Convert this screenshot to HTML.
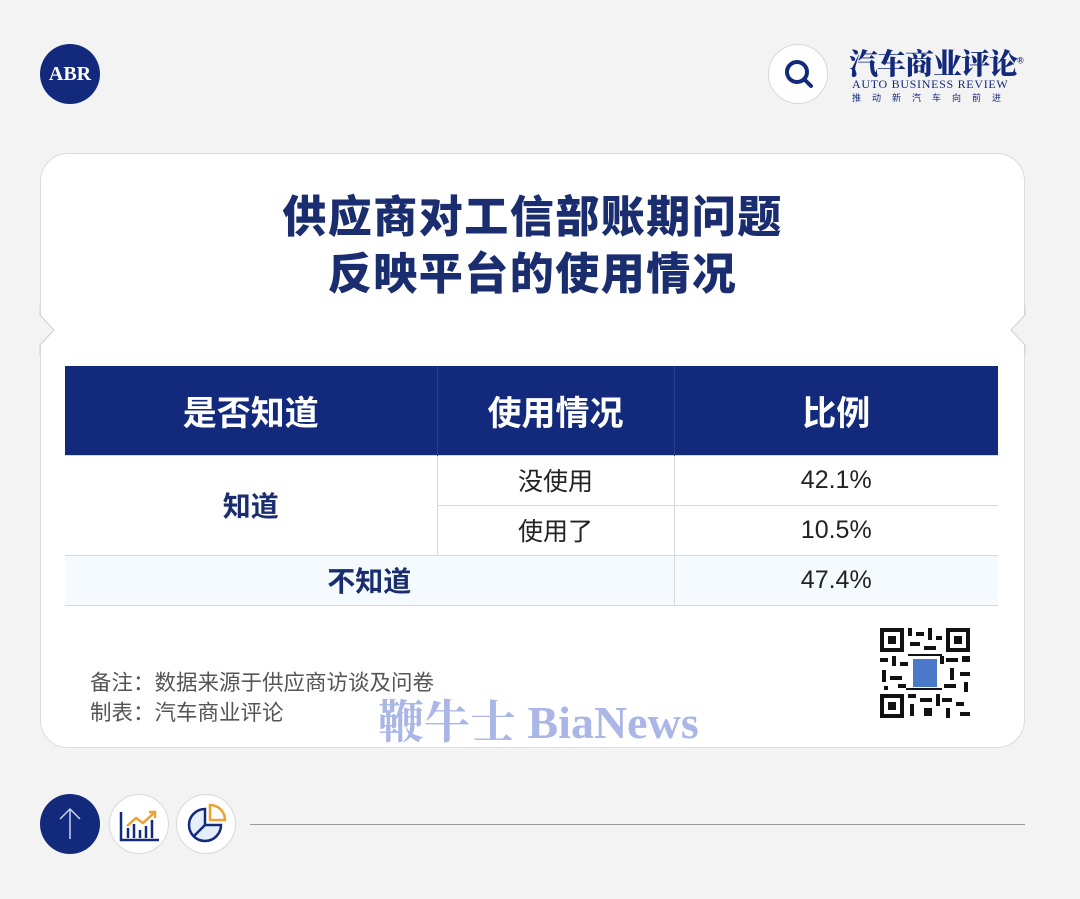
<!DOCTYPE html>
<html><head><meta charset="utf-8"><style>
*{margin:0;padding:0;box-sizing:border-box}
body{width:1080px;height:899px;background:#f3f3f4;position:relative;overflow:hidden;font-family:"Liberation Sans","Noto Sans CJK SC",sans-serif}
.abs{position:absolute}
.card{left:40px;top:153px;width:985px;height:595px;background:#fff;border:1px solid #dcdcdc;border-radius:28px}
.title{left:40px;width:985px;text-align:center;color:#1a2d6e;font-weight:900;font-size:44px;line-height:57px;top:189px;letter-spacing:1.5px}
table{position:absolute;left:65px;top:366px;width:933px;border-collapse:collapse}
th{background:#132a7c;color:#fff;font-size:34px;font-weight:700;height:89px}
td{height:50px;text-align:center;font-size:25px;color:#222;border:1px solid #d8d8d8}
.b{color:#1a2d6e;font-weight:700;font-size:28px}
.note{left:90px;color:#555;font-size:21.5px;line-height:30px;top:668px}
.wm{left:378px;top:686px;font-family:"Liberation Serif","Noto Serif CJK SC",serif;font-size:46px;color:#a9b6e6;font-weight:700}
</style></head><body>
<div class="abs" style="left:40px;top:44px;width:60px;height:60px;border-radius:50%;background:#132a7c;color:#fff;font-family:'Liberation Serif',serif;font-weight:700;font-size:20px;text-align:center;line-height:60px">ABR</div>
<div class="abs" style="left:768px;top:44px;width:60px;height:60px;border-radius:50%;background:#fff;border:1px solid #d8d8d8"></div>
<svg class="abs" style="left:768px;top:44px" width="60" height="60"><circle cx="29" cy="28" r="10" fill="none" stroke="#132a7c" stroke-width="4"/><line x1="36" y1="35" x2="43" y2="42" stroke="#132a7c" stroke-width="4" stroke-linecap="round"/></svg>
<div class="abs" style="left:849px;top:42px;font-family:'Liberation Serif','Noto Serif CJK SC',serif;font-weight:900;font-size:29px;color:#132a7c;letter-spacing:-1px">汽车商业评论<sup style="font-size:9px">®</sup></div>
<div class="abs" style="left:852px;top:77px;font-family:'Liberation Serif',serif;font-size:12px;color:#132a7c;letter-spacing:.7px">AUTO BUSINESS REVIEW</div>
<div class="abs" style="left:852px;top:91px;font-size:9px;color:#132a7c;letter-spacing:11px">推动新汽车向前进</div>
<div class="abs card"></div>
<svg class="abs" style="left:30px;top:305px" width="30" height="50"><path d="M10 0 L10 10 L24 25 L10 40 L10 50 L0 50 L0 0Z" fill="#f3f3f4"/><path d="M10 0 L10 10 L24 25 L10 40 L10 50" fill="none" stroke="#d4d4d4" stroke-width="1.2"/></svg>
<svg class="abs" style="left:1005px;top:305px" width="30" height="50"><path d="M20 0 L20 10 L6 25 L20 40 L20 50 L30 50 L30 0Z" fill="#f3f3f4"/><path d="M20 0 L20 10 L6 25 L20 40 L20 50" fill="none" stroke="#d4d4d4" stroke-width="1.2"/></svg>
<div class="abs title">供应商对工信部账期问题<br>反映平台的使用情况</div>
<table>
<tr><th style="width:372px">是否知道</th><th style="width:237px;border-left:1px solid #2a3f8a;border-right:1px solid #2a3f8a">使用情况</th><th>比例</th></tr>
<tr><td rowspan="2" class="b" style="border-left:none">知道</td><td>没使用</td><td style="border-right:none">42.1%</td></tr>
<tr><td>使用了</td><td style="border-right:none">10.5%</td></tr>
<tr style="background:#f4fafd"><td colspan="2" class="b" style="border-left:none">不知道</td><td style="border-right:none">47.4%</td></tr>
</table>
<div class="abs note">备注：数据来源于供应商访谈及问卷<br>制表：汽车商业评论</div>
<div class="abs wm">鞭牛士 BiaNews</div>
<svg class="abs" style="left:880px;top:628px" width="90" height="90" shape-rendering="crispEdges">
<g fill="#111">
<path d="M0 0h24v24H0zM4 4v16h16V4zM8 8h8v8H8z" fill-rule="evenodd"/>
<path d="M66 0h24v24H66zM70 4v16h16V4zM74 8h8v8h-8z" fill-rule="evenodd"/>
<path d="M0 66h24v24H0zM4 70v16h16V70zM8 74h8v8H8z" fill-rule="evenodd"/>
<rect x="28" y="0" width="4" height="8"/><rect x="36" y="4" width="8" height="4"/><rect x="48" y="0" width="4" height="12"/><rect x="56" y="8" width="6" height="4"/><rect x="30" y="14" width="10" height="4"/><rect x="44" y="18" width="12" height="4"/>
<rect x="0" y="30" width="8" height="4"/><rect x="12" y="28" width="4" height="10"/><rect x="20" y="34" width="8" height="4"/><rect x="2" y="42" width="4" height="12"/><rect x="10" y="48" width="12" height="4"/><rect x="18" y="56" width="8" height="4"/><rect x="4" y="58" width="4" height="4"/>
<rect x="60" y="28" width="4" height="8"/><rect x="66" y="30" width="12" height="4"/><rect x="82" y="28" width="8" height="6"/><rect x="70" y="40" width="4" height="12"/><rect x="80" y="44" width="10" height="4"/><rect x="64" y="56" width="12" height="4"/><rect x="84" y="54" width="4" height="10"/>
<rect x="28" y="66" width="8" height="4"/><rect x="30" y="76" width="4" height="12"/><rect x="40" y="70" width="12" height="4"/><rect x="44" y="80" width="8" height="8"/><rect x="56" y="66" width="4" height="12"/><rect x="62" y="70" width="10" height="4"/><rect x="66" y="80" width="4" height="10"/><rect x="76" y="74" width="8" height="4"/><rect x="80" y="84" width="10" height="4"/>
<rect x="28" y="26" width="34" height="2"/><rect x="26" y="60" width="36" height="2"/>
</g>
<rect x="33" y="31" width="24" height="28" fill="#4a79c9"/>
</svg>
<div class="abs" style="left:40px;top:794px;width:60px;height:60px;border-radius:50%;background:#132a7c"></div>
<svg class="abs" style="left:40px;top:794px" width="60" height="60"><path d="M30 45V15M20 25L30 15L40 25" fill="none" stroke="#c9d3f0" stroke-width="1.5"/></svg>
<div class="abs" style="left:109px;top:794px;width:60px;height:60px;border-radius:50%;background:#fff;border:1px solid #d8d8d8"></div>
<svg class="abs" style="left:109px;top:794px" width="60" height="60"><path d="M12 18V46H50" fill="none" stroke="#132a7c" stroke-width="2.5"/><path d="M19 44V34M25 44V30M31 44V36M37 44V32M43 44V26" stroke="#132a7c" stroke-width="2.5"/><path d="M18 32L27 24L34 29L46 18M40 18H46V24" fill="none" stroke="#f0a030" stroke-width="2.5"/></svg>
<div class="abs" style="left:176px;top:794px;width:60px;height:60px;border-radius:50%;background:#fff;border:1px solid #d8d8d8"></div>
<svg class="abs" style="left:176px;top:794px" width="60" height="60"><path d="M29 15A16 16 0 1 0 45 31H29Z" fill="#e6eefb" stroke="#132a7c" stroke-width="2.5"/><path d="M29 31L18 42" stroke="#132a7c" stroke-width="2.5"/><path d="M34 11A15 15 0 0 1 49 26H34Z" fill="#fff" stroke="#f0a030" stroke-width="2.5"/></svg>
<div class="abs" style="left:250px;top:824px;width:775px;height:1px;background:#9a9a9a"></div>
</body></html>
